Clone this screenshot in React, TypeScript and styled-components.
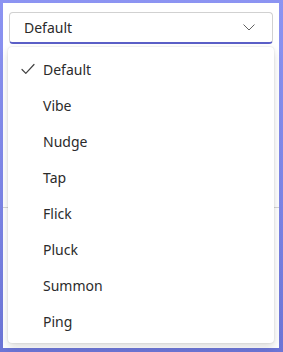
import React from 'react'
import styled, { createGlobalStyle } from 'styled-components'

const GlobalStyle = createGlobalStyle`
  html, body {
    margin: 0;
    padding: 0;
    background: #ffffff;
  }
  body {
    font-family: "Segoe UI", "Noto Sans", "Open Sans", sans-serif;
    -webkit-font-smoothing: antialiased;
  }
`

const Frame = styled.div`
  width: 283px;
  height: 352px;
  box-sizing: border-box;
  padding: 3px 4px 4px 3px;
  background: linear-gradient(180deg, #8c94f2 0%, #7a83e4 60%, #6c75d6 100%);
`

const Surface = styled.div`
  position: relative;
  height: 100%;
  background: #ffffff;
  display: flex;
  flex-direction: column;
  padding: 9px 6px 0 6px;
  box-sizing: border-box;
`

const Trigger = styled.button`
  display: flex;
  align-items: center;
  justify-content: space-between;
  height: 32px;
  width: 100%;
  box-sizing: border-box;
  padding: 0 17px 0 14px;
  background: #ffffff;
  border: 1px solid #d1d1d1;
  border-bottom: 2px solid #5b5fc7;
  border-radius: 4px;
  font-family: inherit;
  font-size: 14px;
  color: #2b2b2b;
  cursor: pointer;
`

const Divider = styled.div`
  margin: 163px -6px 0 -6px;
  height: 1px;
  background: #d6d6d6;
`

const Listbox = styled.div`
  position: absolute;
  left: 5px;
  right: 5px;
  top: 44px;
  padding: 4px;
  background: #ffffff;
  border-radius: 4px;
  box-shadow: 0 0 2px rgba(0, 0, 0, 0.14), 0 4px 8px rgba(0, 0, 0, 0.14);
  display: flex;
  flex-direction: column;
`

const Option = styled.div<{ selected?: boolean }>`
  display: flex;
  align-items: center;
  height: 36px;
  padding: 0 8px;
  font-size: 14px;
  color: #2b2b2b;
  border-radius: 4px;
`

const CheckSlot = styled.span`
  width: 16px;
  height: 16px;
  margin-right: 7px;
  display: flex;
  align-items: center;
  justify-content: center;
  color: #424242;
`

const Check = () => (
  <svg width="14" height="12" viewBox="0 0 14 12" fill="none">
    <path d="M1 6.5 L4.8 10.3 L13 1.5" stroke="currentColor" strokeWidth="1.2" strokeLinecap="round" strokeLinejoin="round" />
  </svg>
)

const Chevron = () => (
  <svg width="12" height="7" viewBox="0 0 12 7" fill="none">
    <path d="M0.8 0.8 L6 6 L11.2 0.8" stroke="#616161" strokeWidth="1" strokeLinecap="round" strokeLinejoin="round" />
  </svg>
)

const options = ['Default', 'Vibe', 'Nudge', 'Tap', 'Flick', 'Pluck', 'Summon', 'Ping']

export default function App() {
  const selected = 'Default'
  return (
    <>
      <GlobalStyle />
      <Frame>
        <Surface>
          <Trigger type="button">
            <span>{selected}</span>
            <Chevron />
          </Trigger>
          <Divider />
          <Listbox role="listbox">
            {options.map(o => (
              <Option key={o} role="option" selected={o === selected}>
                <CheckSlot>{o === selected && <Check />}</CheckSlot>
                {o}
              </Option>
            ))}
          </Listbox>
        </Surface>
      </Frame>
    </>
  )
}
